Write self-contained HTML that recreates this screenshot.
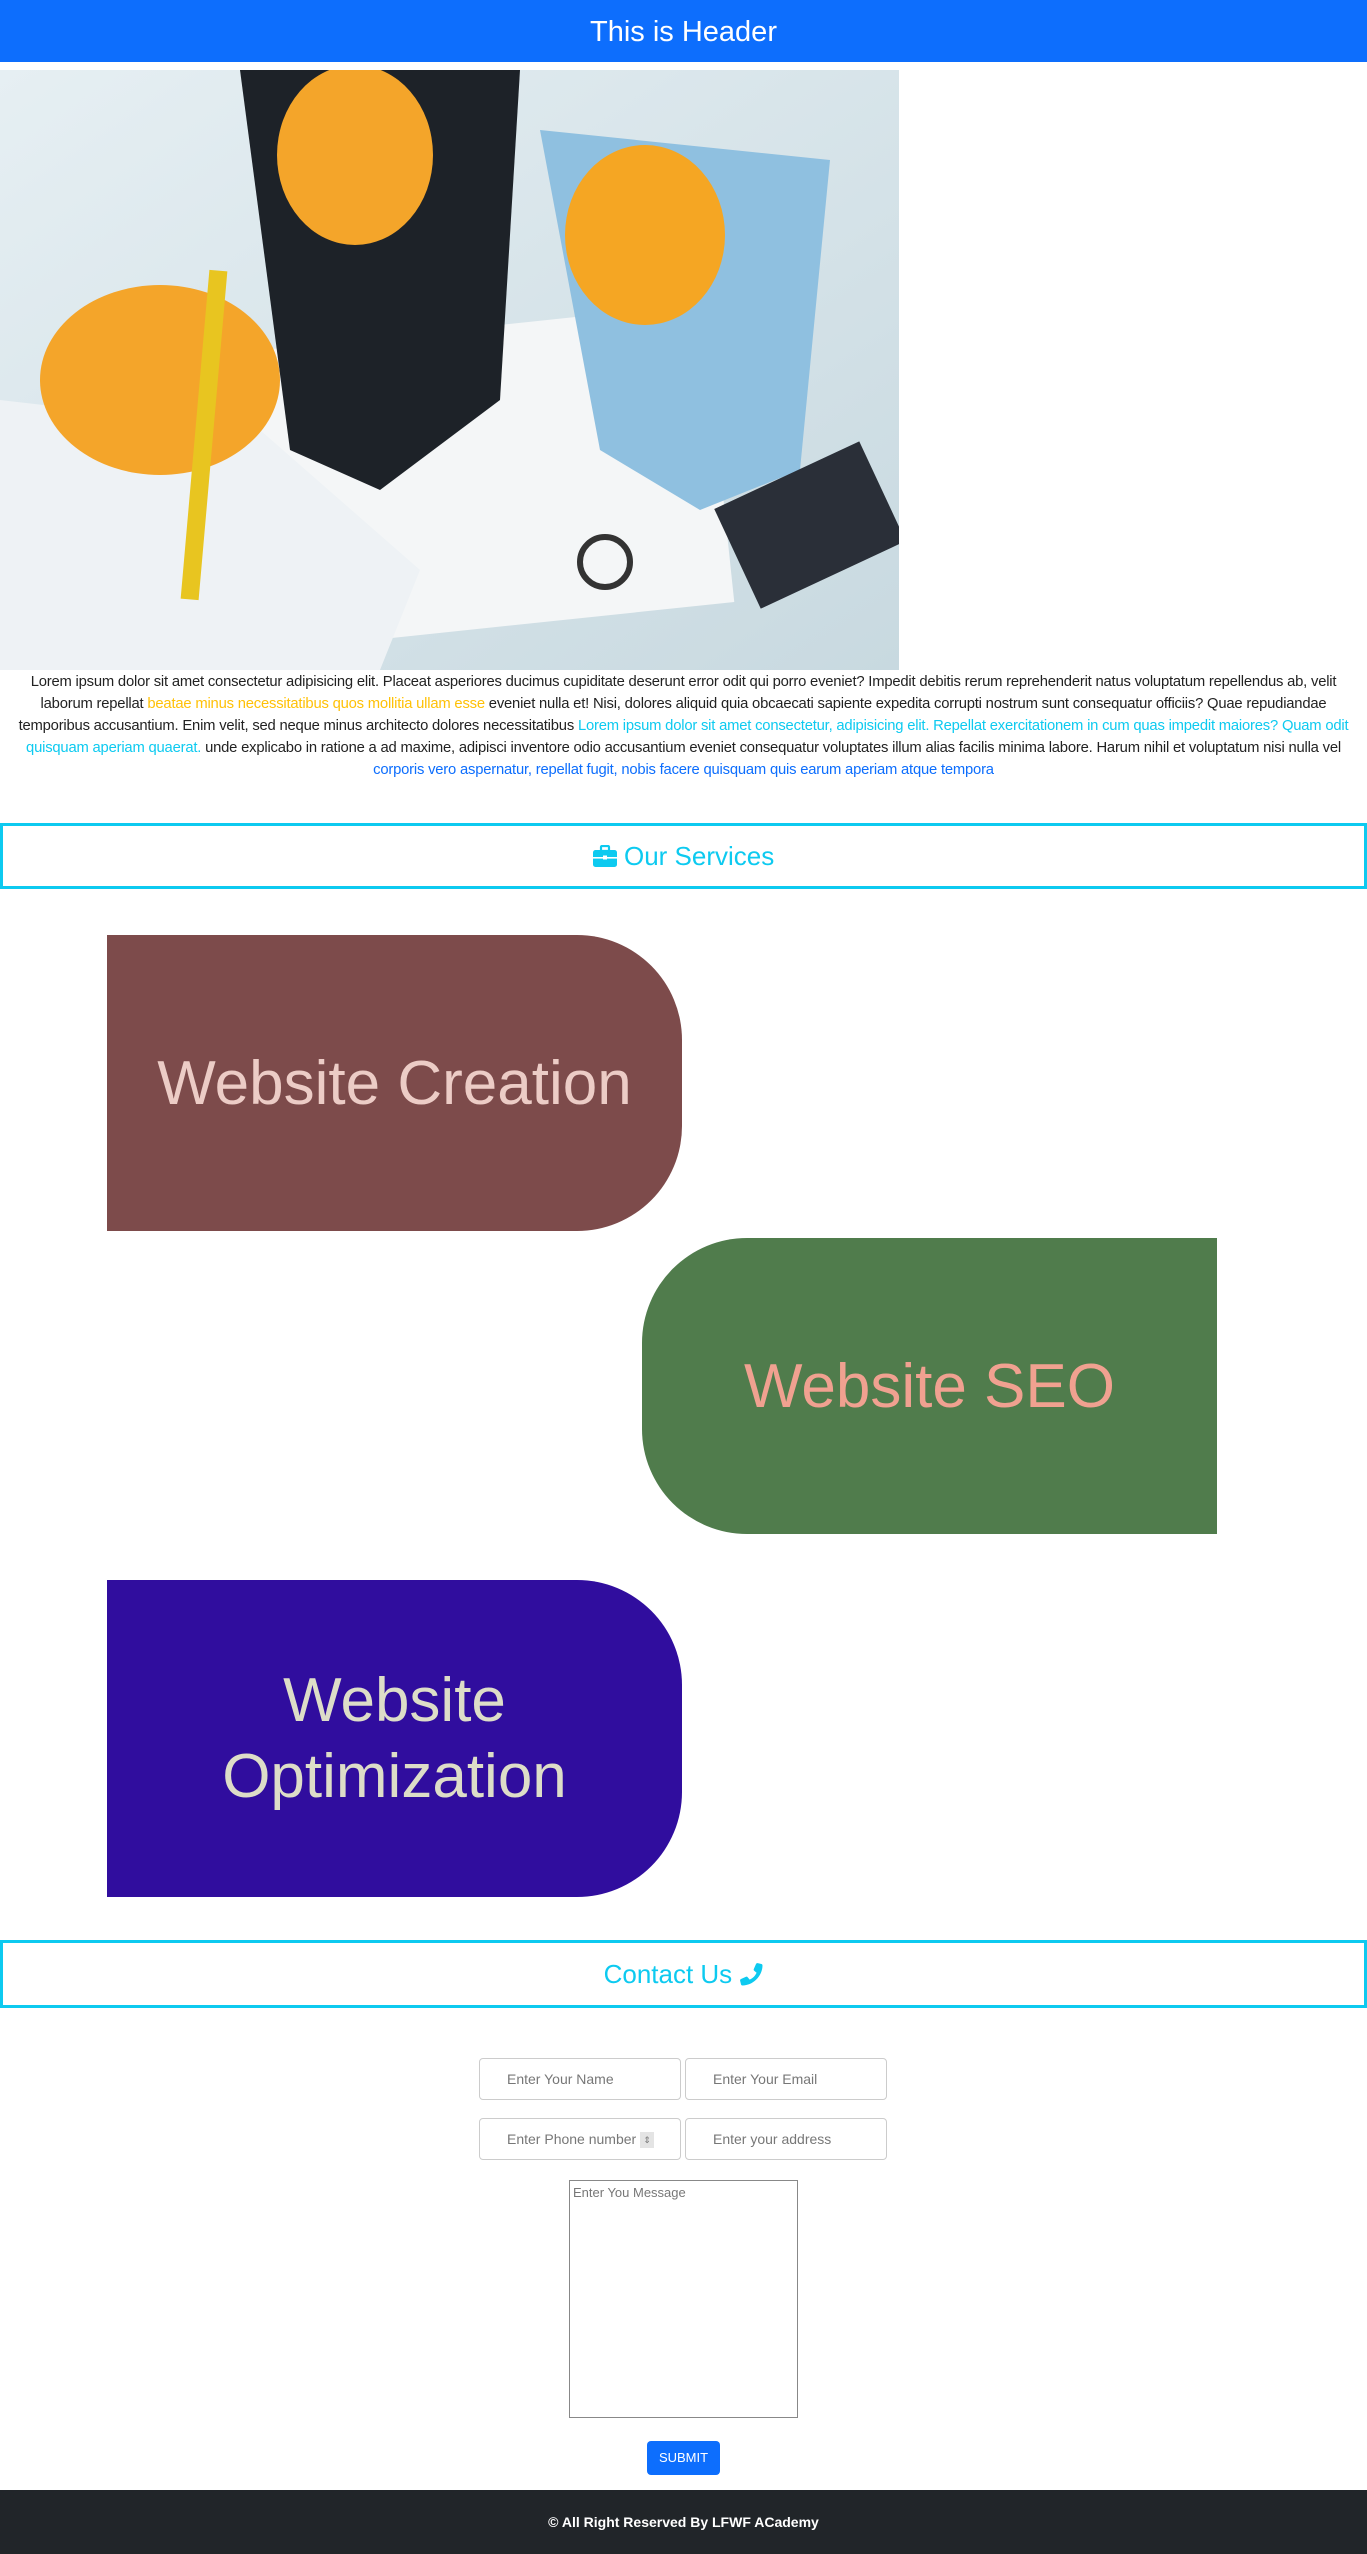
<!DOCTYPE html>
<html><head><meta charset="utf-8"><style>
*{box-sizing:border-box;margin:0;padding:0}
body{width:1367px;height:2554px;font-family:"Liberation Sans",sans-serif;background:#fff;position:relative;overflow:hidden}
.hdr{position:absolute;left:0;top:0;width:1367px;height:62px;background:#0d6efd;color:#fff;font-size:29px;text-align:center;line-height:64px}
.img{position:absolute;left:0;top:70px;width:899px;height:600px}
.p{position:absolute;left:8px;top:671px;width:1351px;font-size:14.8px;line-height:22px;text-align:center;color:#222;letter-spacing:-0.2px}
.y{color:#ffc107}.c{color:#0dcaf0}.b{color:#0d6efd}
.box{position:absolute;left:0;width:1367px;border:3px solid #0dcaf0;color:#0dcaf0;text-align:center;font-size:26px}
.card{position:absolute;display:flex;align-items:center;justify-content:center;text-align:center;font-size:62px}
.in{position:absolute;border:1px solid #ccc;border-radius:4px;height:42px;font-size:14px;color:#777;padding-left:27px;line-height:40px}
.foot{position:absolute;left:0;top:2490px;width:1367px;height:64px;background:#212529;color:#fff;font-weight:bold;font-size:14px;text-align:center;line-height:64px}
</style></head><body>
<div class="hdr">This is Header</div>
<svg class="img" viewBox="0 0 899 600">
<defs><linearGradient id="g" x1="0" y1="0" x2="1" y2="1"><stop offset="0" stop-color="#e6eff3"/><stop offset="1" stop-color="#c8d9e0"/></linearGradient></defs>
<rect width="899" height="600" fill="url(#g)"/>
<rect x="200" y="260" width="520" height="300" fill="#f4f6f7" transform="rotate(-6 460 410)"/>
<path d="M240 0 L520 0 L500 330 L380 420 L290 380 Z" fill="#1d2228"/>
<path d="M540 60 L830 90 L800 400 L700 440 L600 380 Z" fill="#8fc0e0"/>
<path d="M0 330 L260 360 L420 500 L380 600 L0 600 Z" fill="#eef2f5"/>
<ellipse cx="355" cy="85" rx="78" ry="90" fill="#f4a52a"/>
<ellipse cx="645" cy="165" rx="80" ry="90" fill="#f5a623"/>
<ellipse cx="160" cy="310" rx="120" ry="95" fill="#f4a52a"/>
<rect x="730" y="400" width="160" height="110" fill="#2a2f38" transform="rotate(-25 810 455)"/>
<circle cx="605" cy="492" r="25" fill="none" stroke="#333" stroke-width="6"/>
<rect x="195" y="200" width="18" height="330" fill="#e8c520" transform="rotate(5 204 365)"/>
</svg>
<div class="p">Lorem ipsum dolor sit amet consectetur adipisicing elit. Placeat asperiores ducimus cupiditate deserunt error odit qui porro eveniet? Impedit debitis rerum reprehenderit natus voluptatum repellendus ab, velit laborum repellat <span class="y">beatae minus necessitatibus quos mollitia ullam esse</span> eveniet nulla et! Nisi, dolores aliquid quia obcaecati sapiente expedita corrupti nostrum sunt consequatur officiis? Quae repudiandae temporibus accusantium. Enim velit, sed neque minus architecto dolores necessitatibus <span class="c">Lorem ipsum dolor sit amet consectetur, adipisicing elit. Repellat exercitationem in cum quas impedit maiores? Quam odit quisquam aperiam quaerat.</span> unde explicabo in ratione a ad maxime, adipisci inventore odio accusantium eveniet consequatur voluptates illum alias facilis minima labore. Harum nihil et voluptatum nisi nulla vel <span class="b">corporis vero aspernatur, repellat fugit, nobis facere quisquam quis earum aperiam atque tempora</span></div>
<div class="box" style="top:823px;height:66px;line-height:60px"><svg width="24" height="22" viewBox="0 0 24 22" style="vertical-align:-2px"><rect x="8" y="1" width="8" height="5" rx="1" fill="none" stroke="#0dcaf0" stroke-width="2.2"/><rect x="0" y="5" width="24" height="17" rx="2.5" fill="#0dcaf0"/><rect x="0" y="12" width="24" height="1.6" fill="#fff"/><rect x="10" y="10.5" width="4" height="4" fill="#fff"/></svg> Our Services</div>
<div class="card" style="left:107px;top:935px;width:575px;height:296px;background:#7d4b4b;color:#ecccc6;border-radius:0 105px 105px 0">Website Creation</div>
<div class="card" style="left:642px;top:1238px;width:575px;height:296px;background:#507c4c;color:#f0a190;border-radius:105px 0 0 105px">Website SEO</div>
<div class="card" style="left:107px;top:1580px;width:575px;height:317px;background:#300d9e;color:#ddddc8;border-radius:0 105px 105px 0;line-height:76px">Website<br>Optimization</div>
<div class="box" style="top:1940px;height:68px;line-height:62px">Contact Us <svg width="24" height="24" viewBox="0 0 24 24" style="vertical-align:-3px"><path d="M22 17l-5-2.2c-.6-.3-1.300-.1-1.7.4l-2 2.4C10 16 8 14 6.4 10.7l2.4-2c.5-.4.7-1.1.4-1.7L7 2C6.7 1.3 6 1 5.3 1.1L1.6 2C1 2.1.5 2.7.5 3.4.5 14 10 23.5 20.6 23.5c.7 0 1.3-.5 1.4-1.1l.9-3.7c.1-.7-.2-1.4-.9-1.700z" fill="#0dcaf0" transform="scale(-1 1) translate(-24 0)"/></svg></div>
<div class="in" style="left:479px;top:2058px;width:202px">Enter Your Name</div>
<div class="in" style="left:685px;top:2058px;width:202px">Enter Your Email</div>
<div class="in" style="left:479px;top:2118px;width:202px">Enter Phone number <span style="display:inline-block;width:14px;height:16px;background:#e4e4e4;vertical-align:middle;font-size:9px;line-height:16px;text-align:center">⇕</span></div>
<div class="in" style="left:685px;top:2118px;width:202px">Enter your address</div>
<div style="position:absolute;left:569px;top:2180px;width:229px;height:238px;border:1px solid #888;font-size:13px;color:#777;padding:4px 3px">Enter You Message</div>
<div style="position:absolute;left:647px;top:2441px;width:73px;height:34px;background:#0d6efd;color:#fff;border-radius:4px;font-size:13px;text-align:center;line-height:34px">SUBMIT</div>
<div class="foot">© All Right Reserved By LFWF ACademy</div>
</body></html>
